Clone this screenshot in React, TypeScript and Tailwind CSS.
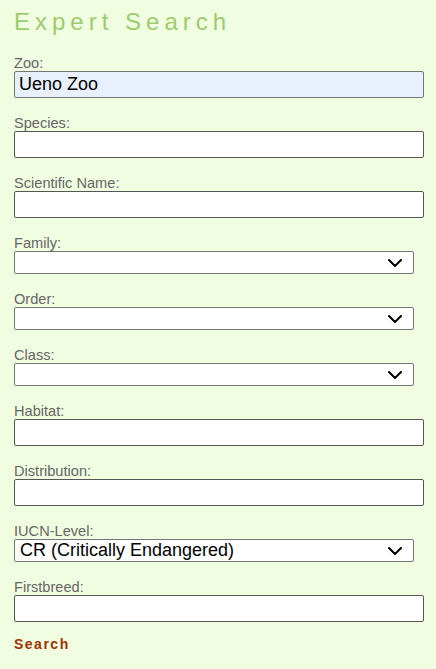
import type { ReactNode } from 'react';

const font = { fontFamily: '"Liberation Sans", Arial, sans-serif' };

function Chevron() {
  return (
    <svg
      className="pointer-events-none absolute right-[11px] top-1/2 -translate-y-1/2"
      width="14"
      height="8"
      viewBox="0 0 14 8"
      fill="none"
    >
      <path d="M1 1l6 6 6-6" stroke="#000" strokeWidth="2" strokeLinecap="round" strokeLinejoin="round" />
    </svg>
  );
}

function Field({ label, children, last = false }: { label: string; children: ReactNode; last?: boolean }) {
  return (
    <div className={last ? 'mb-[14px]' : 'mb-[17px]'}>
      <label className="block text-[14.6px] leading-[16px] text-[#666]">{label}</label>
      {children}
    </div>
  );
}

function TextInput({ value = '', autofill = false }: { value?: string; autofill?: boolean }) {
  return (
    <input
      readOnly
      value={value}
      className={
        'block h-[27px] w-[410px] rounded-[2px] border px-[4px] text-[18px] leading-[25px] text-black outline-none ' +
        (autofill ? 'border-[#767676] bg-[#e8f0fe]' : 'border-[#555] bg-white')
      }
      style={font}
    />
  );
}

function Select({ value = '' }: { value?: string }) {
  return (
    <div className="relative h-[23px] w-[400px] rounded-[2px] border border-[#767676] bg-white">
      <span className="block px-[5px] text-[18px] leading-[21px] text-black">{value}</span>
      <Chevron />
    </div>
  );
}

export default function App() {
  return (
    <div className="min-h-[669px] w-full bg-[#f1fde1] px-[14px] pt-[8px]" style={font}>
      <h1 className="mb-[19px] text-[24px] leading-[28px] tracking-[5px] text-[#9ccc6c]">
        Expert Search
      </h1>
      <form>
        <Field label="Zoo:">
          <TextInput value="Ueno Zoo" autofill />
        </Field>
        <Field label="Species:">
          <TextInput />
        </Field>
        <Field label="Scientific Name:">
          <TextInput />
        </Field>
        <Field label="Family:">
          <Select />
        </Field>
        <Field label="Order:">
          <Select />
        </Field>
        <Field label="Class:">
          <Select />
        </Field>
        <Field label="Habitat:">
          <TextInput />
        </Field>
        <Field label="Distribution:">
          <TextInput />
        </Field>
        <Field label="IUCN-Level:">
          <Select value="CR (Critically Endangered)" />
        </Field>
        <Field label="Firstbreed:" last>
          <TextInput />
        </Field>
        <p className="text-[14px] font-bold leading-[16px] tracking-[1.5px] text-[#993300]">Search</p>
      </form>
    </div>
  );
}
